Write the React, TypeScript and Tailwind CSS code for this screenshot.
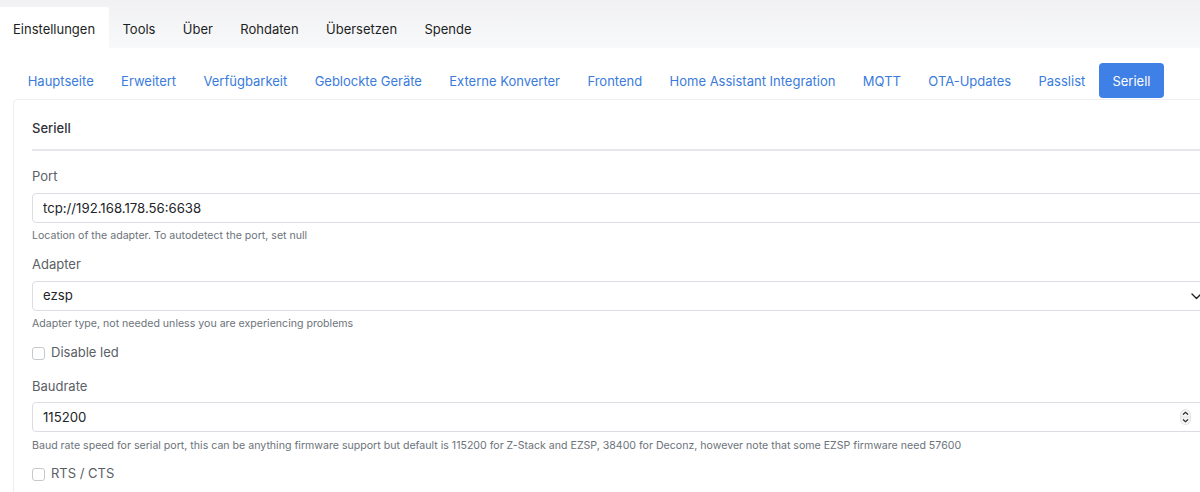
import React from 'react'

const topTabs = ['Einstellungen', 'Tools', 'Über', 'Rohdaten', 'Übersetzen', 'Spende']
const subTabs = [
  'Hauptseite',
  'Erweitert',
  'Verfügbarkeit',
  'Geblockte Geräte',
  'Externe Konverter',
  'Frontend',
  'Home Assistant Integration',
  'MQTT',
  'OTA-Updates',
  'Passlist',
  'Seriell',
]

const font = { fontFamily: 'Inter, "Noto Sans", sans-serif' }

function Checkbox({ label }: { label: string }) {
  return (
    <label className="flex items-center h-5 gap-[6px]">
      <span className="w-[13px] h-[13px] rounded-[3px] border border-[#c5c9ce] bg-white" />
      <span className="text-[13px] text-[#5b6066]">{label}</span>
    </label>
  )
}

export default function App() {
  return (
    <div className="w-[1200px] h-[492px] overflow-hidden bg-white text-[#212529]" style={font}>
      {/* obere Tabs */}
      <div className="h-12 flex items-end bg-gradient-to-b from-[#f1f1f4] to-[#f8f9fb]">
        {topTabs.map((t, i) => (
          <div
            key={t}
            className={`h-[41px] shrink-0 whitespace-nowrap flex items-center pt-[5px] px-[13.7px] text-[13px] text-[#1d1f22] ${i === 0 ? 'bg-white pl-[13px] rounded-tr-[3px]' : ''}`}
          >
            {t}
          </div>
        ))}
      </div>

      {/* Unter-Navigation */}
      <div className="flex items-center pl-[14px] pt-[15px] pb-[1px]">
        {subTabs.map((t) => (
          <div
            key={t}
            className={`h-[35px] shrink-0 whitespace-nowrap flex items-center pt-[2px] text-[13px] rounded-[4px] ${t === 'Seriell' ? 'bg-[#3f80e6] text-white px-[13.5px]' : 'text-[#3a7bdc] px-[13.7px]'}`}
          >
            {t}
          </div>
        ))}
      </div>

      {/* Karte */}
      <div className="ml-[13px] w-[1210px] border border-[#eceef1] rounded-[4px] bg-white">
        <div className="mx-[18px] pt-[18px] pb-[11px] border-b-2 border-[#e4e6e9]">
          <div className="h-5 leading-5 text-[13px] font-medium text-[#2f3236]">Seriell</div>
        </div>

        <div className="px-[18px]">
          <div className="mt-[15px] h-5 leading-5 text-[13px] text-[#5b6066]">Port</div>
          <input
            readOnly
            value="tcp://192.168.178.56:6638"
            className="mt-[7px] block w-full h-[30px] px-[10px] border border-[#dadde1] rounded-[4px] text-[13.2px] text-[#212529] outline-none"
          />
          <div className="mt-[6px] h-[14px] leading-[14px] text-[10.6px] text-[#6c737a]">
            Location of the adapter. To autodetect the port, set null
          </div>

          <div className="mt-[11px] h-5 leading-5 text-[13px] text-[#5b6066]">Adapter</div>
          <div className="relative mt-[7px] h-[30px]">
            <select className="appearance-none block w-full h-[30px] px-[10px] border border-[#dadde1] rounded-[4px] text-[13.2px] text-[#212529] bg-white outline-none">
              <option>ezsp</option>
            </select>
            <svg className="absolute right-[2px] top-[12px] w-[11px] h-[7px]" viewBox="0 0 11 7" fill="none">
              <path d="M1 1l4.5 4.5L10 1" stroke="#222" strokeWidth="1.4" strokeLinecap="round" strokeLinejoin="round" />
            </svg>
          </div>
          <div className="mt-[6px] h-[14px] leading-[14px] text-[10.6px] text-[#6c737a]">
            Adapter type, not needed unless you are experiencing problems
          </div>

          <div className="mt-[12px]">
            <Checkbox label="Disable led" />
          </div>

          <div className="mt-[13px] h-5 leading-5 text-[13px] text-[#5b6066]">Baudrate</div>
          <div className="relative mt-[6px] h-[30px]">
            <input
              readOnly
              value="115200"
              className="block w-full h-[30px] px-[10px] border border-[#dadde1] rounded-[4px] text-[13.2px] text-[#212529] outline-none"
            />
            <svg className="absolute right-[13px] top-[7px] w-[11px] h-[16px]" viewBox="0 0 11 16" fill="none">
              <rect x="0.5" y="0.5" width="10" height="15" rx="5" fill="#f4f5f6" stroke="#e1e3e6" />
              <line x1="1" y1="8" x2="10" y2="8" stroke="#e1e3e6" />
              <path d="M3.3 5.3L5.5 3.3l2.2 2" stroke="#333" strokeWidth="1.2" strokeLinecap="round" strokeLinejoin="round" />
              <path d="M3.3 10.7l2.2 2 2.2-2" stroke="#333" strokeWidth="1.2" strokeLinecap="round" strokeLinejoin="round" />
            </svg>
          </div>
          <div className="mt-[7px] h-[14px] leading-[14px] text-[10.6px] text-[#6c737a]">
            Baud rate speed for serial port, this can be anything firmware support but default is 115200 for Z-Stack and EZSP, 38400 for Deconz, however note that some EZSP firmware need 57600
          </div>

          <div className="mt-[11px] pb-4">
            <Checkbox label="RTS / CTS" />
          </div>
        </div>
      </div>
    </div>
  )
}
